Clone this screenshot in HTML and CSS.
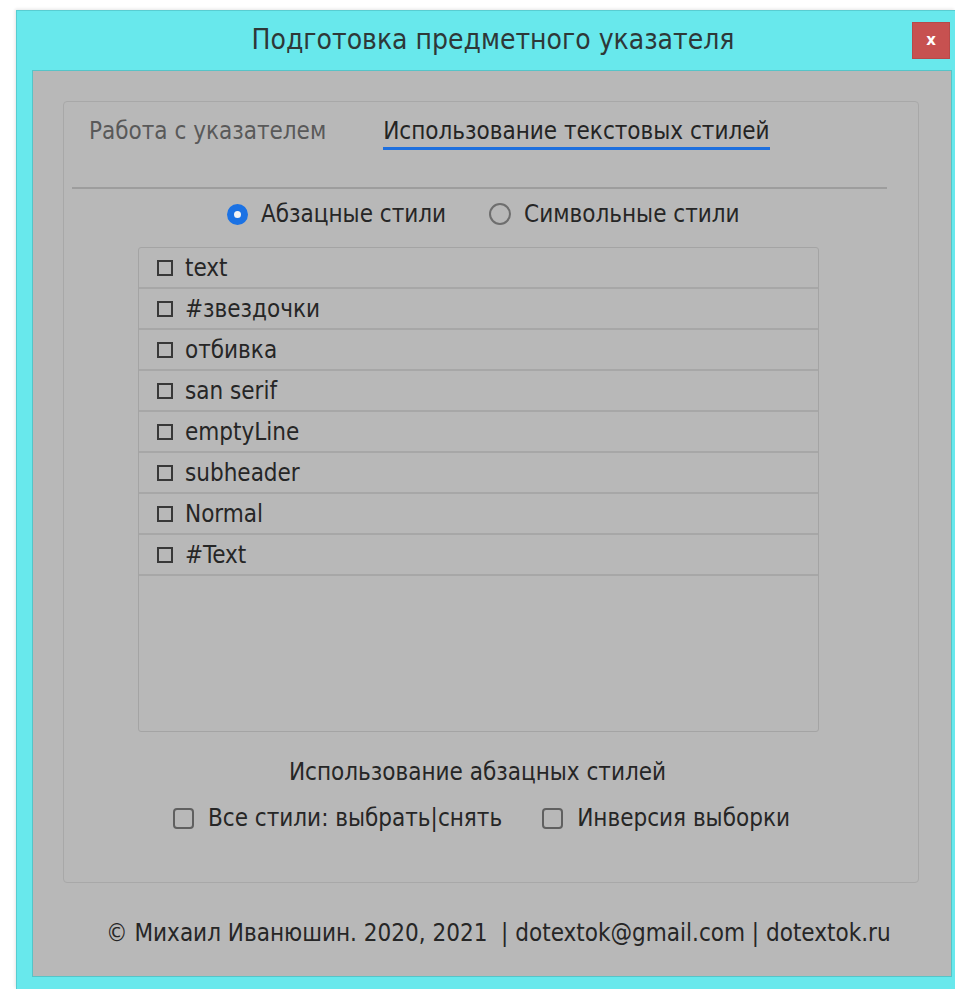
FILE: index.html
```html
<!DOCTYPE html>
<html lang="ru">
<head>
<meta charset="utf-8">
<title>Подготовка предметного указателя</title>
<link rel="stylesheet" href="styles.css">
</head>
<body>
<div class="window">
  <div class="titlebar">
    <div class="title">Подготовка предметного указателя</div>
    <div class="close">x</div>
  </div>
  <div class="client">
    <div class="group">
      <div class="tabs">
        <div class="tab">Работа с указателем</div>
        <div class="tab active">Использование текстовых стилей</div>
      </div>
      <div class="divider"></div>
      <div class="radios">
        <label class="radio"><span class="dot on"></span>Абзацные стили</label>
        <label class="radio"><span class="dot"></span>Символьные стили</label>
      </div>
      <div class="list">
        <div class="row"><span class="box"></span>text</div>
        <div class="row"><span class="box"></span>#звездочки</div>
        <div class="row"><span class="box"></span>отбивка</div>
        <div class="row"><span class="box"></span>san serif</div>
        <div class="row"><span class="box"></span>emptyLine</div>
        <div class="row"><span class="box"></span>subheader</div>
        <div class="row"><span class="box"></span>Normal</div>
        <div class="row"><span class="box"></span>#Text</div>
      </div>
      <div class="caption">Использование абзацных стилей</div>
      <div class="checks">
        <label class="check"><span class="cb"></span>Все стили: выбрать|снять</label>
        <label class="check"><span class="cb"></span>Инверсия выборки</label>
      </div>
    </div>
    <div class="footer">© Михаил Иванюшин. 2020, 2021&nbsp; | dotextok@gmail.com | dotextok.ru</div>
  </div>
</div>
</body>
</html>
```

FILE: styles.css
```css
html, body {
  margin: 0;
  padding: 0;
  background: #ffffff;
  overflow: hidden;
}

body {
  font-family: "DejaVu Sans Condensed", "DejaVu Sans", sans-serif;
  font-size: 24px;
  line-height: 28px;
  color: #262626;
}

/* outer dialog frame */
.window {
  margin: 10px 0 0 16px;
  width: 939px;
  height: 979px;
  box-sizing: border-box;
  background: #68e8ec;
  border-left: 1px solid #58cdd1;
  border-top: 1px solid #58cdd1;
  box-shadow: -1px -1px 3px rgba(0, 0, 0, 0.10);
  display: flex;
  flex-direction: column;
}

.titlebar {
  height: 59px;
  flex: none;
  display: flex;
  align-items: center;
  justify-content: center;
  position: relative;
}

.title {
  font-size: 28px;
  line-height: 34px;
  color: #2e3838;
  margin-left: 14px;
  margin-top: -2px;
}

.close {
  position: absolute;
  right: 5px;
  top: 11px;
  width: 38px;
  height: 37px;
  box-sizing: border-box;
  background: #c75150;
  border: 1px solid #b64a49;
  color: #fff;
  font-family: "DejaVu Sans", sans-serif;
  font-weight: bold;
  font-size: 15px;
  line-height: 1;
  display: flex;
  align-items: center;
  justify-content: center;
}

/* grey client area */
.client {
  flex: none;
  margin-left: 15px;
  width: 920px;
  height: 907px;
  box-sizing: border-box;
  background: #b8b8b8;
  border: 1px solid #55c4c8;
  padding: 30px 0 0 30px;
}

.group {
  width: 856px;
  height: 782px;
  box-sizing: border-box;
  border: 1px solid #a8a8a8;
  border-radius: 4px;
}

.tabs {
  display: flex;
  gap: 57px;
  padding: 15px 0 0 25px;
}

.tab {
  color: #595959;
  padding-bottom: 2px;
  border-bottom: 3px solid transparent;
}

.tab.active {
  color: #242424;
  border-bottom-color: #1d6fde;
}

.divider {
  margin: 37px 0 0 8px;
  width: 815px;
  height: 2px;
  background: #9d9d9d;
}

.radios {
  display: flex;
  gap: 43px;
  margin-top: 11px;
  padding-left: 163px;
}

.radio {
  display: flex;
  align-items: center;
  gap: 13px;
}

.dot {
  width: 22px;
  height: 22px;
  border-radius: 50%;
  box-sizing: border-box;
  border: 2px solid #6e6e6e;
}

.dot.on {
  width: 21px;
  height: 21px;
  border: 7px solid #1b72e4;
  background: #f4f4f4;
}

.list {
  margin: 19px 0 0 74px;
  width: 681px;
  height: 485px;
  box-sizing: border-box;
  border: 1px solid #a4a4a4;
  border-radius: 3px;
}

.row {
  height: 41px;
  box-sizing: border-box;
  border-bottom: 2px solid #a7a7a7;
  display: flex;
  align-items: center;
  padding: 1px 0 0 18px;
}

.box {
  width: 16px;
  height: 16px;
  box-sizing: border-box;
  border: 2px solid #383838;
  margin-right: 12px;
}

.caption {
  text-align: center;
  margin-top: 26px;
  padding-right: 27px;
}

.checks {
  display: flex;
  gap: 40px;
  margin-top: 18px;
  padding-left: 109px;
}

.check {
  display: flex;
  align-items: center;
  gap: 14px;
}

.cb {
  width: 21px;
  height: 21px;
  box-sizing: border-box;
  border: 2px solid #606060;
  border-radius: 4px;
}

.footer {
  margin-top: 36px;
  padding-left: 43px;
}
```
